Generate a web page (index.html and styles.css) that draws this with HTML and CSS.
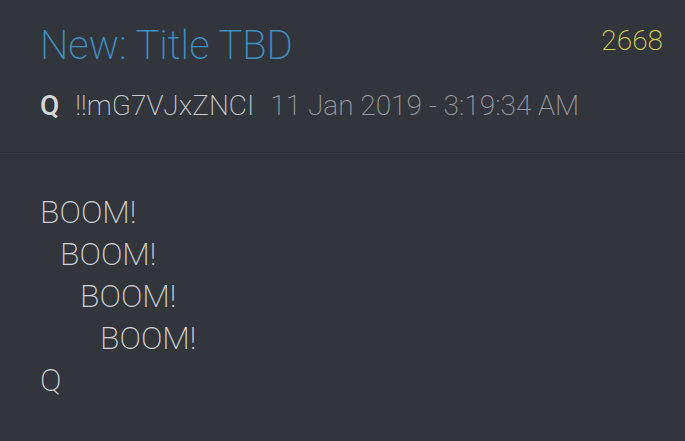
FILE: index.html
```html
<!DOCTYPE html>
<html lang="en">

<head>
    <meta charset="UTF-8">
    <meta name="viewport" content="width=device-width, initial-scale=1.0">
    <title>Post 2668</title>
    <link rel="stylesheet" href="styles.css">
</head>

<body>
    <!-- Post header -->
    <header class="post-header">
        <div class="title-row">
            <h1 class="post-title">New: Title TBD</h1>
            <span class="post-number">2668</span>
        </div>
        <div class="meta">
            <span class="author">Q</span>
            <span class="trip">!!mG7VJxZNCI</span>
            <span class="date">11 Jan 2019 - 3:19:34 AM</span>
        </div>
    </header>

    <!-- Post body -->
    <main class="post-body">
        <p>BOOM!</p>
        <p class="indent-1">BOOM!</p>
        <p class="indent-2">BOOM!</p>
        <p class="indent-3">BOOM!</p>
        <p>Q</p>
    </main>
</body>

</html>
```

FILE: styles.css
```css
* {
    box-sizing: border-box;
    margin: 0;
    padding: 0;
    font-family: Roboto, "Liberation Sans", sans-serif;
}

body {
    background: #32353c;
    height: 100vh;
    overflow: hidden;
}

/* Header */

.post-header {
    padding: 22px 22px 0 40px;
    height: 153px;
    border-bottom: 1px solid #272a2f;
    box-shadow: 0 1px 0 #393c43;
}

.title-row {
    display: flex;
    justify-content: space-between;
    align-items: flex-start;
}

.post-title {
    font-size: 40px;
    font-weight: 200;
    color: #3f90c2;
    line-height: 48px;
}

.post-number {
    font-size: 28px;
    font-weight: 200;
    color: #d8d54c;
    line-height: 33px;
    margin-top: 2px;
}

.meta {
    display: flex;
    align-items: baseline;
    gap: 14px;
    margin-top: 19px;
    font-size: 28px;
    font-weight: 200;
    line-height: 33px;
}

.author {
    font-weight: 500;
    color: #d4d5d8;
    margin-right: 2px;
}

.trip {
    color: #c9cbcf;
    margin-right: 2px;
}

.date {
    color: #9a9ca1;
}

/* Body */

.post-body {
    padding: 38px 40px 0 40px;
    color: #d1d3d7;
    font-size: 32px;
    font-weight: 200;
}

.post-body p {
    line-height: 42px;
}

.indent-1 {
    padding-left: 20px;
}

.indent-2 {
    padding-left: 40px;
}

.indent-3 {
    padding-left: 60px;
}
```
